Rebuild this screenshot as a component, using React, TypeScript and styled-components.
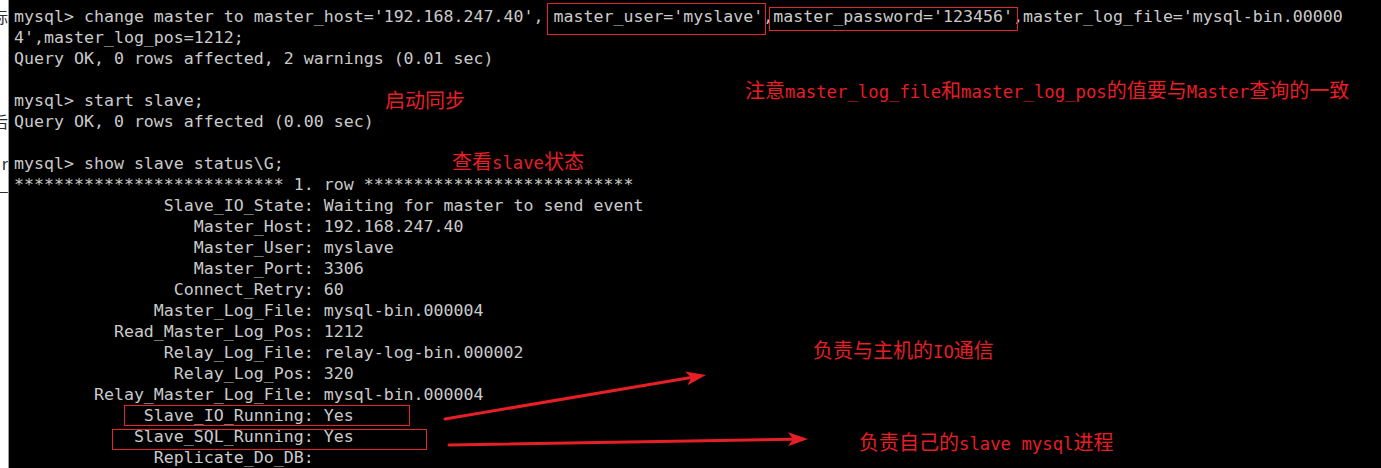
import styled, { createGlobalStyle } from 'styled-components';

const GlobalStyle = createGlobalStyle`
  html, body {
    margin: 0;
    padding: 0;
    background: #000;
  }
  body {
    width: 1381px;
    height: 468px;
    overflow: hidden;
  }
`;

const Screen = styled.div`
  position: relative;
  display: flex;
  width: 1381px;
  height: 468px;
  background: #000;
  overflow: hidden;
`;

const Gutter = styled.div`
  flex: none;
  width: 8px;
  padding-top: 6px;
  background: #fff;
  border-right: 1px solid #9c9c9c;
  overflow: hidden;
  display: flex;
  flex-direction: column;
`;

const GutterLine = styled.div`
  height: 21px;
  display: flex;
  justify-content: flex-end;
  font-family: "Noto Sans CJK SC", sans-serif;
  font-size: 16px;
  line-height: 21px;
  color: #2b2b2b;
  white-space: nowrap;
`;

const Terminal = styled.div`
  flex: 1;
  padding: 6px 0 0 5px;
  font-family: "DejaVu Sans Mono", monospace;
  font-size: 16.6px;
  line-height: 21px;
  color: #cacaca;
  white-space: pre;
`;

const Line = styled.div`
  height: 21px;
`;

const Mark = styled.div<{ $x: number; $y: number; $w: number; $h: number }>`
  position: absolute;
  left: ${({ $x }) => $x}px;
  top: ${({ $y }) => $y}px;
  width: ${({ $w }) => $w}px;
  height: ${({ $h }) => $h}px;
  box-sizing: border-box;
  border: 1px solid #e3262d;
`;

const Note = styled.div<{ $x: number; $y: number }>`
  position: absolute;
  left: ${({ $x }) => $x}px;
  top: ${({ $y }) => $y}px;
  color: #e61e25;
  font-family: "DejaVu Sans Mono", monospace;
  font-size: 17.3px;
  line-height: 24px;
  white-space: nowrap;
`;

const Han = styled.span`
  font-family: "Noto Sans CJK SC", sans-serif;
  font-size: 20px;
`;

const Arrows = styled.svg`
  position: absolute;
  left: 0;
  top: 0;
  pointer-events: none;
`;

const gutter = ['标', '', '', '', '', '后', '', 'r', '_'];

const status: [string, string][] = [
  ['Slave_IO_State', 'Waiting for master to send event'],
  ['Master_Host', '192.168.247.40'],
  ['Master_User', 'myslave'],
  ['Master_Port', '3306'],
  ['Connect_Retry', '60'],
  ['Master_Log_File', 'mysql-bin.000004'],
  ['Read_Master_Log_Pos', '1212'],
  ['Relay_Log_File', 'relay-log-bin.000002'],
  ['Relay_Log_Pos', '320'],
  ['Relay_Master_Log_File', 'mysql-bin.000004'],
  ['Slave_IO_Running', 'Yes'],
  ['Slave_SQL_Running', 'Yes'],
  ['Replicate_Do_DB', ''],
];

const lines = [
  "mysql> change master to master_host='192.168.247.40', master_user='myslave',master_password='123456',master_log_file='mysql-bin.00000",
  "4',master_log_pos=1212;",
  'Query OK, 0 rows affected, 2 warnings (0.01 sec)',
  '',
  'mysql> start slave;',
  'Query OK, 0 rows affected (0.00 sec)',
  '',
  'mysql> show slave status\\G;',
  '*************************** 1. row ***************************',
  ...status.map(([k, v]) => `${k}:`.padStart(30) + ' ' + v),
];

const RED = '#e61e25';

export default function App() {
  return (
    <>
      <GlobalStyle />
      <Screen>
        <Gutter>
          {gutter.map((g, i) => (
            <GutterLine key={i}>{g}</GutterLine>
          ))}
        </Gutter>
        <Terminal>
          {lines.map((l, i) => (
            <Line key={i}>{l}</Line>
          ))}
        </Terminal>

        <Mark $x={547} $y={3} $w={219} $h={32} />
        <Mark $x={769} $y={7} $w={249} $h={24} />
        <Mark $x={124} $y={405} $w={286} $h={21} />
        <Mark $x={112} $y={429} $w={315} $h={21} />

        <Note $x={745} $y={78}>
          <Han>注意</Han>master_log_file<Han>和</Han>master_log_pos<Han>的值要与</Han>Master<Han>查询的一致</Han>
        </Note>
        <Note $x={385} $y={88}>
          <Han>启动同步</Han>
        </Note>
        <Note $x={452} $y={149}>
          <Han>查看</Han>slave<Han>状态</Han>
        </Note>
        <Note $x={813} $y={338}>
          <Han>负责与主机的</Han>IO<Han>通信</Han>
        </Note>
        <Note $x={859} $y={430}>
          <Han>负责自己的</Han>slave mysql<Han>进程</Han>
        </Note>

        <Arrows width={1381} height={468} viewBox="0 0 1381 468">
          <line x1={445} y1={419} x2={691} y2={377.5} stroke={RED} strokeWidth={3} strokeLinecap="round" />
          <polygon points="706,375 685,371.4 691.2,377.5 687.5,385.2" fill={RED} />
          <line x1={449} y1={445} x2={793} y2={439.3} stroke={RED} strokeWidth={3} strokeLinecap="round" />
          <polygon points="808,439 788,432.3 793,439.2 788,446.3" fill={RED} />
        </Arrows>
      </Screen>
    </>
  );
}
